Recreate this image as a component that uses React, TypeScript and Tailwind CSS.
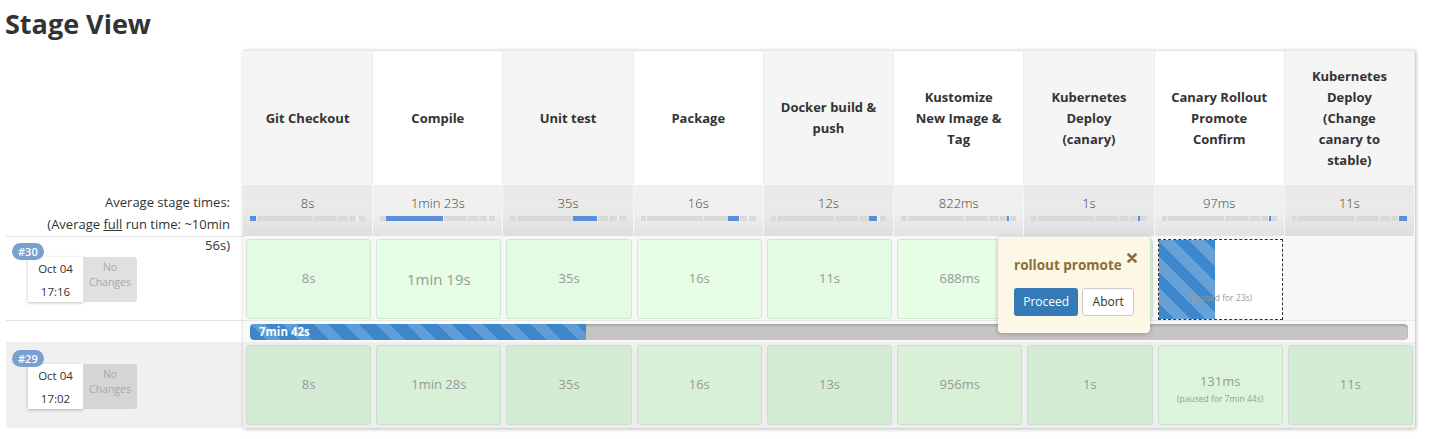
import React from "react";

type Stage = { name: string[]; avg: string; t: number };

const stages: Stage[] = [
  { name: ["Git Checkout"], avg: "8s", t: 8 },
  { name: ["Compile"], avg: "1min 23s", t: 83 },
  { name: ["Unit test"], avg: "35s", t: 35 },
  { name: ["Package"], avg: "16s", t: 16 },
  { name: ["Docker build &", "push"], avg: "12s", t: 12 },
  { name: ["Kustomize", "New Image &", "Tag"], avg: "822ms", t: 0.822 },
  { name: ["Kubernetes", "Deploy", "(canary)"], avg: "1s", t: 1 },
  { name: ["Canary Rollout", "Promote", "Confirm"], avg: "97ms", t: 0.097 },
  { name: ["Kubernetes", "Deploy", "(Change", "canary to", "stable)"], avg: "11s", t: 11 },
];

const total = stages.reduce((s, x) => s + x.t, 0);
const starts = stages.map((_, i) => stages.slice(0, i).reduce((s, x) => s + x.t, 0));

// col 7 of run #30 sits under the input popup
const run30 = ["8s", "1min 19s", "35s", "16s", "11s", "688ms", ""];
const run29 = ["8s", "1min 28s", "35s", "16s", "13s", "956ms", "1s", "131ms", "11s"];

const MiniBar = ({ index }: { index: number }) => {
  const left = (starts[index] / total) * 100;
  const width = (stages[index].t / total) * 100;
  return (
    <div className="relative mx-[7px] h-[5px] bg-[#d9d9d9]">
      {starts.slice(1).map((s, i) => (
        <div
          key={i}
          className="absolute top-0 h-full w-px bg-[#efefef]"
          style={{ left: `${(s / total) * 100}%` }}
        />
      ))}
      <div
        className="absolute top-0 h-full min-w-[2px] bg-[#5a8ed6]"
        style={{ left: `${left}%`, width: `${width}%` }}
      />
    </div>
  );
};

const BuildInfo = ({ num, time, changesBg, badgeTop }: { num: string; time: string; changesBg: string; badgeTop: string }) => (
  <>
    <div className={`absolute left-[6px] ${badgeTop} z-10 h-[17px] px-[6px] rounded-full bg-[#7ba0d0] text-white text-[11px] font-semibold leading-[17px]`}>
      {num}
    </div>
    <div className="flex ml-[22px]">
      <div className="w-[55px] h-[45px] bg-white shadow-[0_1px_3px_rgba(0,0,0,0.25)] text-center text-[11.5px] leading-[23px] text-[#333]">
        <div>Oct 04</div>
        <div>{time}</div>
      </div>
      <div className={`w-[54px] h-[45px] ${changesBg} rounded-r-[3px] pt-[3px] text-center text-[10.5px] leading-[15px] text-[#a8a8a8]`}>
        <div>No</div>
        <div>Changes</div>
      </div>
    </div>
  </>
);

const App = () => {
  return (
    <div className="w-[1434px] h-[439px] overflow-hidden bg-white text-[#333]" style={{ fontFamily: '"Open Sans", "Noto Sans", sans-serif' }}>
      {/* Title */}
      <div className="h-[50px] pl-[5px] pt-[6px]">
        <h2 className="text-[27px] leading-[36px] font-bold text-[#333]">Stage View</h2>
      </div>

      <div className="flex items-start">
        {/* Left column */}
        <div className="w-[237px] ml-[6px]">
          <div className="h-[135px]" />
          <div className="relative z-20 h-[51px] pt-[7px] pr-[13px] text-right text-[13px] leading-[21.5px] text-[#333]">
            <div>Average stage times:</div>
            <div>
              (Average <span className="underline">full</span> run time: ~10min
            </div>
            <div>56s)</div>
          </div>
          <div className="relative h-[85px] pt-[20px] bg-white border-y border-[#e3e3e3]">
            <BuildInfo num="#30" time="17:16" changesBg="bg-[#e0e0e0]" badgeTop="top-[6px]" />
          </div>
          <div className="h-[21px]" />
          <div className="relative h-[86px] pt-[22px] bg-[#f0f0f0]">
            <BuildInfo num="#29" time="17:02" changesBg="bg-[#d5d5d5]" badgeTop="top-[8px]" />
          </div>
        </div>

        {/* Stage table */}
        <div className="relative w-[1172px] shadow-[1px_1px_4px_rgba(0,0,0,0.28)]">
          {/* Header */}
          <div className="grid grid-cols-9 h-[135px] border-t border-[#e6e6e6]">
            {stages.map((s, i) => (
              <div
                key={i}
                className={`flex items-center justify-center text-center text-[13px] leading-[21px] font-bold text-[#333] border-r border-[#ececec] ${i % 2 === 0 ? "bg-[#f5f5f5]" : "bg-white"}`}
              >
                <div>
                  {s.name.map((l, j) => (
                    <div key={j}>{l}</div>
                  ))}
                </div>
              </div>
            ))}
          </div>

          {/* Average row */}
          <div className="grid grid-cols-9 h-[51px]">
            {stages.map((s, i) => (
              <div
                key={i}
                className={`border-r border-[#f7f7f7] pt-[8px] bg-gradient-to-b ${i % 2 === 0 ? "from-[#e9e9e9] via-[#eaeaea] to-[#dedede]" : "from-[#efefef] via-[#f0f0f0] to-[#e3e3e3]"}`}
              >
                <div className="text-center text-[13px] leading-[20px] text-[#444] font-light mb-[3px]">{s.avg}</div>
                <MiniBar index={i} />
              </div>
            ))}
          </div>

          {/* Run #30 */}
          <div className="grid grid-cols-9 h-[85px] bg-[#f7f7f7] border-b border-[#e8e8e8]">
            {stages.map((_, i) => (
              <div key={i} className="pl-[3px] pr-[2px] pt-[3px]">
                {i < 7 && (
                  <div
                    className={`h-[80px] rounded-[3px] border border-[#d2e6d2] flex items-center justify-center text-[#999] ${i % 2 === 0 ? "bg-[#e3fbe3]" : "bg-[#e6fde6]"} ${i === 1 ? "text-[15px]" : "text-[13px]"}`}
                  >
                    {run30[i]}
                  </div>
                )}
                {i === 7 && (
                  <div className="relative h-[81px] border border-dashed border-[#333] bg-white overflow-hidden">
                    <div className="absolute left-0 top-0 bottom-0 w-[56px] bg-[image:repeating-linear-gradient(45deg,#3d87cc_0px,#3d87cc_11px,#67a1d8_11px,#67a1d8_22px)]" />
                    <div className="absolute left-0 right-0 top-[52px] text-center text-[8.5px] text-[#999]">(paused for 23s)</div>
                  </div>
                )}
              </div>
            ))}
          </div>

          {/* Progress */}
          <div className="h-[21px] pt-[3px] px-[7px] bg-[#f9f9f9]">
            <div className="h-[16px] rounded-[4px] bg-[#c5c5c5] shadow-[inset_0_2px_2px_rgba(0,0,0,0.15)] overflow-hidden">
              <div className="h-full w-[336px] rounded-l-[4px] bg-[image:repeating-linear-gradient(45deg,#3e86ca_0px,#3e86ca_12px,#609dd7_12px,#609dd7_22px)] pl-[9px] text-[11.5px] leading-[16px] font-bold text-white">
                7min 42s
              </div>
            </div>
          </div>

          {/* Run #29 */}
          <div className="grid grid-cols-9 h-[86px] bg-[#eeeeee]">
            {run29.map((d, i) => (
              <div key={i} className="pl-[3px] pr-[2px] pt-[3px]">
                <div
                  className={`h-[80px] rounded-[3px] border border-[#c9dfc9] flex flex-col items-center justify-center text-[13px] text-[#999] ${i === 7 ? "bg-[#dcf4dc]" : i % 2 === 0 ? "bg-[#d4ecd4]" : "bg-[#d8f0d8]"}`}
                >
                  <div className={i === 7 ? "mt-[8px]" : ""}>{d}</div>
                  {i === 7 && <div className="text-[8.5px] leading-[14px]">(paused for 7min 44s)</div>}
                </div>
              </div>
            ))}
          </div>

          {/* Input popup */}
          <div className="absolute left-[755px] top-[187px] z-30 w-[152px] h-[96px] rounded-[4px] bg-[#fcf8e5] shadow-[0_1px_5px_rgba(0,0,0,0.25)] px-[16px] pt-[18px]">
            <svg className="absolute right-[13px] top-[16px]" width="10" height="10" viewBox="0 0 10 10">
              <path d="M1.5 1.5 L8.5 8.5 M8.5 1.5 L1.5 8.5" stroke="#8a6d3b" strokeWidth="2.6" strokeLinecap="round" />
            </svg>
            <div className="text-[13.5px] font-bold leading-[20px] text-[#8a6d3b]">rollout promote</div>
            <div className="flex gap-[4px] mt-[13px]">
              <button className="w-[65px] h-[28px] rounded-[3px] bg-[#337ab7] text-white text-[12px]">Proceed</button>
              <button className="w-[52px] h-[28px] rounded-[3px] bg-white border border-[#ccc] text-[#333] text-[12px]">Abort</button>
            </div>
          </div>
        </div>
      </div>
    </div>
  );
};

export default App;
